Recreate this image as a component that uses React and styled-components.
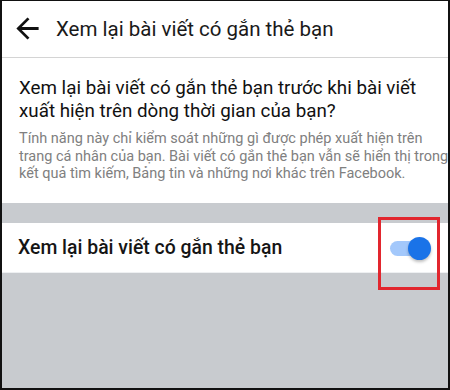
import styled, { createGlobalStyle } from "styled-components"

const Global = createGlobalStyle`
  html, body { margin: 0; padding: 0; background: #fff; }
  * { box-sizing: border-box; }
`

const Frame = styled.div`
  position: relative;
  width: 450px;
  height: 390px;
  display: flex;
  flex-direction: column;
  border-style: solid;
  border-color: #111;
  border-width: 1px 2px 2px 2px;
  background: #c8cbcf;
  font-family: Roboto, "Noto Sans", sans-serif;
  overflow: hidden;
`

const Header = styled.div`
  height: 57px;
  display: flex;
  align-items: center;
  gap: 16px;
  padding: 0 0 1px 13px;
  background: #fff;
  border-bottom: 1px solid #d4d4d4;
`

const BackIcon = styled.svg`
  width: 25px;
  height: 25px;
  fill: #111;
`

const Title = styled.h1`
  margin: 0;
  font-size: 20.5px;
  font-weight: 400;
  color: #1a1a1a;
`

const Intro = styled.div`
  background: #fff;
  padding: 19px 4px 20px 17px;
`

const Question = styled.h2`
  margin: 0;
  font-size: 18.8px;
  line-height: 22.5px;
  font-weight: 400;
  color: #111;
  white-space: nowrap;
`

const Note = styled.p`
  margin: 8px 0 0;
  font-size: 14.5px;
  line-height: 17.5px;
  color: #808080;
  white-space: nowrap;
`

const Gap = styled.div`
  height: 20px;
`

const Row = styled.div`
  height: 50px;
  display: flex;
  align-items: center;
  justify-content: space-between;
  padding: 0 16px 0 16px;
  background: #fff;
  border-bottom: 1px solid #eef0f2;
`

const RowLabel = styled.span`
  font-size: 19.4px;
  font-weight: 500;
  color: #151515;
  padding-top: 1px;
`

const Switch = styled.div`
  position: relative;
  width: 42px;
  height: 24px;
  display: flex;
  align-items: center;
  margin-top: 3px;
`

const Track = styled.div`
  width: 34px;
  height: 15px;
  border-radius: 8px;
  background: ${p => (p.on ? "#a3c8fb" : "#c4c4c4")};
`

const Thumb = styled.div`
  position: absolute;
  top: 0;
  left: ${p => (p.on ? "18px" : "0")};
  width: 23px;
  height: 23px;
  border-radius: 50%;
  background: ${p => (p.on ? "#1a73e8" : "#f2f2f2")};
  box-shadow: 0 2px 3px rgba(0, 0, 0, 0.25);
`

const Highlight = styled.div`
  position: absolute;
  left: 376px;
  top: 216px;
  width: 62px;
  height: 73px;
  border: 3px solid #e2262e;
`

const App = () => {
  const on = true
  return (
    <Frame>
      <Global />
      <Header>
        <BackIcon viewBox="3 3 18 18">
          <path d="M20 11H7.83l5.59-5.59L12 4l-8 8 8 8 1.41-1.41L7.83 13H20v-2z" />
        </BackIcon>
        <Title>Xem lại bài viết có gắn thẻ bạn</Title>
      </Header>
      <Intro>
        <Question>
          Xem lại bài viết có gắn thẻ bạn trước khi bài viết<br />
          xuất hiện trên dòng thời gian của bạn?
        </Question>
        <Note>
          Tính năng này chỉ kiểm soát những gì được phép xuất hiện trên<br />
          trang cá nhân của bạn. Bài viết có gắn thẻ bạn vẫn sẽ hiển thị trong<br />
          kết quả tìm kiếm, Bảng tin và những nơi khác trên Facebook.
        </Note>
      </Intro>
      <Gap />
      <Row>
        <RowLabel>Xem lại bài viết có gắn thẻ bạn</RowLabel>
        <Switch>
          <Track on={on ? 1 : 0} />
          <Thumb on={on ? 1 : 0} />
        </Switch>
      </Row>
      <Highlight />
    </Frame>
  )
}

export default App
